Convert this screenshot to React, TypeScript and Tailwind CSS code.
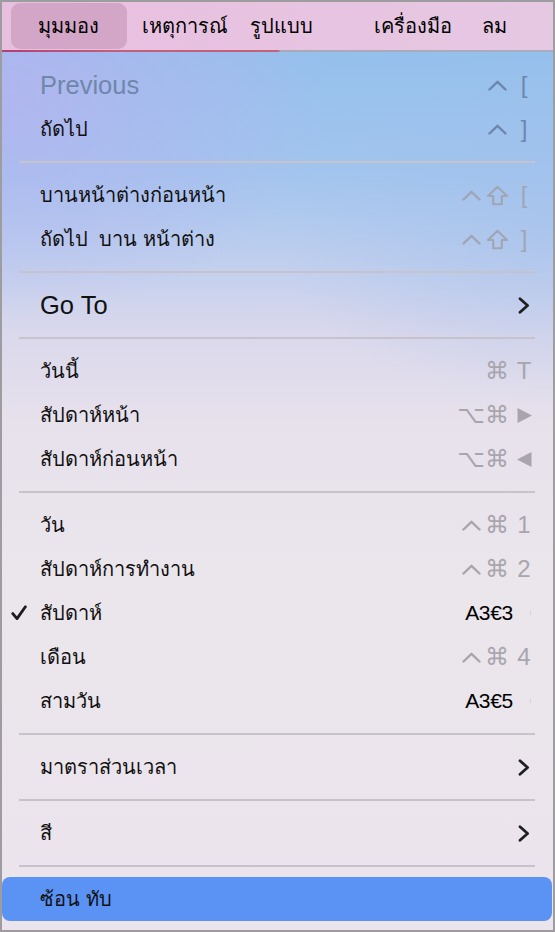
import React from "react";

const SANS = "font-['Liberation_Sans','Noto_Sans',sans-serif]";

type Tone = "blue" | "slate" | "gray";

const toneClass: Record<Tone, string> = {
  blue: "text-[#6c86ad]",
  slate: "text-[#a0a5b3]",
  gray: "text-[#a9a5ac]",
};

const Caret = () => (
  <svg width="19" height="11" viewBox="0 0 19 11" fill="none">
    <polyline points="1.5,9.5 9.5,1.8 17.5,9.5" stroke="currentColor" strokeWidth="2.4" strokeLinecap="round" strokeLinejoin="round" />
  </svg>
);

const Shift = () => (
  <svg width="23" height="21" viewBox="0 0 23 21" fill="none">
    <path d="M11.5 1.8 L21 11 H15.8 V19.2 H7.2 V11 H2 Z" stroke="currentColor" strokeWidth="2.1" strokeLinejoin="round" />
  </svg>
);

const Cmd = () => (
  <span className="font-['DejaVu_Sans',sans-serif] text-[24px] leading-none">⌘</span>
);

const Opt = () => (
  <span className="font-['DejaVu_Sans',sans-serif] text-[24px] leading-none">⌥</span>
);

const TriRight = () => (
  <svg width="17" height="17" viewBox="0 0 17 17">
    <path d="M1.5 1 L16 8.5 L1.5 16 Z" fill="currentColor" />
  </svg>
);

const TriLeft = () => (
  <svg width="17" height="17" viewBox="0 0 17 17">
    <path d="M15.5 1 L1 8.5 L15.5 16 Z" fill="currentColor" />
  </svg>
);

const Chevron = () => (
  <svg width="12" height="17" viewBox="0 0 12 17" fill="none">
    <polyline points="2,1.8 9.6,8.5 2,15.2" stroke="#1f1f22" strokeWidth="2.8" strokeLinecap="round" strokeLinejoin="round" />
  </svg>
);

const Check = () => (
  <svg width="16" height="16" viewBox="0 0 16 16" fill="none">
    <polyline points="1.8,8.6 6,13.6 14.4,1.8" stroke="#1c1c1e" strokeWidth="2.8" strokeLinecap="round" strokeLinejoin="round" />
  </svg>
);

type Mod = "caret" | "shift" | "cmd" | "opt";

const ModIcon = ({ m }: { m: Mod }) => {
  if (m === "caret") return <Caret />;
  if (m === "shift") return <Shift />;
  if (m === "cmd") return <Cmd />;
  return <Opt />;
};

type Item = {
  label: string;
  latin?: boolean;
  disabled?: boolean;
  checked?: boolean;
  mods?: Mod[];
  keyText?: string;
  keyIcon?: "right" | "left";
  plain?: string;
  submenu?: boolean;
  tone?: Tone;
};

const Shortcut = ({ item }: { item: Item }) => {
  if (item.submenu) {
    return (
      <div className="flex items-center">
        <div className="w-[22px] flex justify-center">
          <Chevron />
        </div>
      </div>
    );
  }
  if (item.plain) {
    return (
      <div className="flex items-center">
        <span className={`${SANS} text-[21px] text-black tracking-[-0.3px]`}>{item.plain}</span>
        <div className="w-[22px] flex justify-end pr-[4px]">
          <span className="block w-[1px] h-[4px] bg-[#d6d2d8]" />
        </div>
      </div>
    );
  }
  if (!item.mods && !item.keyText && !item.keyIcon) return null;
  const tone = toneClass[item.tone ?? "gray"];
  return (
    <div className={`flex items-center ${tone}`}>
      {(item.mods ?? []).map((m, i) => (
        <div key={i} className="w-[26px] flex justify-center items-center">
          <ModIcon m={m} />
        </div>
      ))}
      <div className="w-[22px] ml-[3px] flex justify-center items-center">
        {item.keyText && (
          <span className={`${SANS} text-[24px] leading-none`}>{item.keyText}</span>
        )}
        {item.keyIcon === "right" && <TriRight />}
        {item.keyIcon === "left" && <TriLeft />}
      </div>
    </div>
  );
};

const Row = ({ item, highlight }: { item: Item; highlight?: boolean }) => (
  <div
    className={`h-[44px] flex items-center pr-[18px] ${
      highlight ? "bg-[#5b93f5] rounded-[8px] mr-[1px]" : ""
    }`}
  >
    <div className="w-[38px] pl-[9px] flex items-center">{item.checked && <Check />}</div>
    <div
      className={`flex-1 whitespace-pre ${SANS} ${
        item.latin ? "text-[25.5px]" : "text-[20px]"
      } ${item.disabled ? "text-[#6f87ab]" : "text-[#111]"}`}
    >
      {item.label}
    </div>
    <Shortcut item={item} />
  </div>
);

const Sep = () => (
  <div className="h-[22px] flex items-center pl-[17px] pr-[18px]">
    <div className="h-[1.5px] w-full bg-[#c7c3cc]" />
  </div>
);

const group1: Item[] = [
  { label: "Previous", latin: true, disabled: true, mods: ["caret"], keyText: "[", tone: "blue" },
  { label: "ถัดไป", mods: ["caret"], keyText: "]", tone: "blue" },
];
const group2: Item[] = [
  { label: "บานหน้าต่างก่อนหน้า", mods: ["caret", "shift"], keyText: "[", tone: "slate" },
  { label: "ถัดไป  บาน หน้าต่าง", mods: ["caret", "shift"], keyText: "]", tone: "slate" },
];
const group3: Item[] = [{ label: "Go To", latin: true, submenu: true }];
const group4: Item[] = [
  { label: "วันนี้", mods: ["cmd"], keyText: "T" },
  { label: "สัปดาห์หน้า", mods: ["opt", "cmd"], keyIcon: "right" },
  { label: "สัปดาห์ก่อนหน้า", mods: ["opt", "cmd"], keyIcon: "left" },
];
const group5: Item[] = [
  { label: "วัน", mods: ["caret", "cmd"], keyText: "1" },
  { label: "สัปดาห์การทำงาน", mods: ["caret", "cmd"], keyText: "2" },
  { label: "สัปดาห์", checked: true, plain: "A3€3" },
  { label: "เดือน", mods: ["caret", "cmd"], keyText: "4" },
  { label: "สามวัน", plain: "A3€5" },
];
const group6: Item[] = [{ label: "มาตราส่วนเวลา", submenu: true }];
const group7: Item[] = [{ label: "สี", submenu: true }];

const groups = [group1, group2, group3, group4, group5, group6, group7];

export default function App() {
  return (
    <div
      className={`w-[555px] h-[932px] border-2 border-[#9d9d9f] overflow-hidden flex flex-col ${SANS}`}
    >
      {/* Menu bar */}
      <div className="h-[48px] shrink-0 flex items-center bg-[linear-gradient(90deg,#e8c0df_0%,#e7c4e1_60%,#e6c8e3_100%)] text-[20px] text-black">
        <div className="ml-[9px] h-[46px] w-[116px] rounded-[9px] bg-[#d3a6c8] flex items-center pl-[27px]">
          มุมมอง
        </div>
        <div className="ml-[15px]">เหตุการณ์</div>
        <div className="ml-[22px]">รูปแบบ</div>
        <div className="ml-[61px]">เครื่องมือ</div>
        <div className="ml-[30px]">ลม</div>
      </div>
      <div className="h-[2px] shrink-0 bg-[linear-gradient(90deg,#b2416f_0%,#c0607e_20%,#c0637f_50%,#a9a9b8_50.6%,#a9adbd_100%)]" />

      {/* Menu body */}
      <div className="flex-1 flex flex-col pt-[11px] bg-[radial-gradient(ellipse_60%_25%_at_0%_5%,rgba(185,178,240,0.75),transparent),radial-gradient(ellipse_50%_20%_at_100%_20%,rgba(160,190,235,0.5),transparent),linear-gradient(180deg,#95c0ec_0%,#a2c5ee_14%,#c0cfee_24%,#dad8ec_32%,#e7e1ec_42%,#ebe5ec_60%,#ebe4ec_100%)]">
        {groups.map((g, gi) => (
          <React.Fragment key={gi}>
            {g.map((it, i) => (
              <Row key={i} item={it} />
            ))}
            <Sep />
          </React.Fragment>
        ))}
        <Row item={{ label: "ซ้อน ทับ" }} highlight />
      </div>
    </div>
  );
}
